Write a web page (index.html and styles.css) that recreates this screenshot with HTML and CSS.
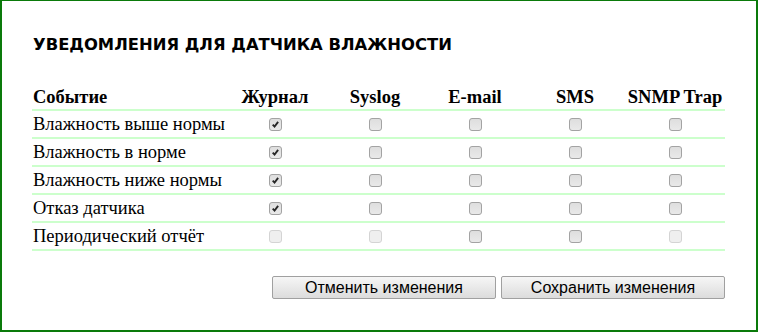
FILE: index.html
```html
<!DOCTYPE html>
<html>
<head>
  <title>Уведомления для датчика влажности</title>
  <meta charset="utf-8">
  <link rel="stylesheet" href="styles.css">
</head>
<body>
  <div class="panel">
    <h1 class="panel-title">УВЕДОМЛЕНИЯ ДЛЯ ДАТЧИКА ВЛАЖНОСТИ</h1>

    <table class="notify-table">
      <colgroup>
        <col class="event-col">
        <col class="chan-col">
        <col class="chan-col">
        <col class="chan-col">
        <col class="chan-col">
        <col class="chan-col">
      </colgroup>
      <thead>
        <tr>
          <th class="event-cell">Событие</th>
          <th>Журнал</th>
          <th>Syslog</th>
          <th>E-mail</th>
          <th>SMS</th>
          <th>SNMP Trap</th>
        </tr>
      </thead>
      <tbody>
        <tr>
          <td class="event-cell">Влажность выше нормы</td>
          <td><span class="cb checked"><svg viewBox="0 0 13 13"><path d="M3.2 6.6 L5.4 9 L9.6 3.4"/></svg></span></td>
          <td><span class="cb"></span></td>
          <td><span class="cb"></span></td>
          <td><span class="cb"></span></td>
          <td><span class="cb"></span></td>
        </tr>
        <tr>
          <td class="event-cell">Влажность в норме</td>
          <td><span class="cb checked"><svg viewBox="0 0 13 13"><path d="M3.2 6.6 L5.4 9 L9.6 3.4"/></svg></span></td>
          <td><span class="cb"></span></td>
          <td><span class="cb"></span></td>
          <td><span class="cb"></span></td>
          <td><span class="cb"></span></td>
        </tr>
        <tr>
          <td class="event-cell">Влажность ниже нормы</td>
          <td><span class="cb checked"><svg viewBox="0 0 13 13"><path d="M3.2 6.6 L5.4 9 L9.6 3.4"/></svg></span></td>
          <td><span class="cb"></span></td>
          <td><span class="cb"></span></td>
          <td><span class="cb"></span></td>
          <td><span class="cb"></span></td>
        </tr>
        <tr>
          <td class="event-cell">Отказ датчика</td>
          <td><span class="cb checked"><svg viewBox="0 0 13 13"><path d="M3.2 6.6 L5.4 9 L9.6 3.4"/></svg></span></td>
          <td><span class="cb"></span></td>
          <td><span class="cb"></span></td>
          <td><span class="cb"></span></td>
          <td><span class="cb"></span></td>
        </tr>
        <tr>
          <td class="event-cell">Периодический отчёт</td>
          <td><span class="cb disabled"></span></td>
          <td><span class="cb disabled"></span></td>
          <td><span class="cb"></span></td>
          <td><span class="cb"></span></td>
          <td><span class="cb disabled"></span></td>
        </tr>
      </tbody>
    </table>

    <div class="actions">
      <button class="btn">Отменить изменения</button>
      <button class="btn">Сохранить изменения</button>
    </div>
  </div>
</body>
</html>
```

FILE: styles.css
```css
body {
  margin: 0;
  width: 758px;
  height: 332px;
  overflow: hidden;
  background: #fff;
}

.panel {
  box-sizing: border-box;
  width: 758px;
  height: 332px;
  border: 2px solid #0a7a0a;
  border-top-width: 1px;
  padding: 0 31px 0 30px;
}

.panel-title {
  margin: 34px 0 0 1px;
  font-family: 'DejaVu Sans', sans-serif;
  font-size: 16.4px;
  font-weight: bold;
  color: #000;
  line-height: 20px;
}

.notify-table {
  margin-top: 30px;
  width: 693px;
  table-layout: fixed;
  border-collapse: collapse;
  font-family: 'Liberation Serif', serif;
  color: #000;
}

.event-col {
  width: 193px;
}

.chan-col {
  width: 100px;
}

.notify-table th {
  font-size: 18.5px;
  font-weight: bold;
  text-align: center;
  height: 24px;
  padding: 0 1px;
  white-space: nowrap;
  border-bottom: 2px solid #ccffcc;
}

.notify-table td {
  font-size: 18.5px;
  text-align: center;
  height: 26px;
  padding: 0 1px;
  white-space: nowrap;
  border-bottom: 2px solid #ccffcc;
}

.notify-table .event-cell {
  text-align: left;
}

.cb {
  display: inline-block;
  box-sizing: border-box;
  width: 13px;
  height: 13px;
  border: 1px solid #a3a3a3;
  border-radius: 3px;
  background: linear-gradient(#dedede, #e9e9e9);
  vertical-align: middle;
  position: relative;
  top: -1px;
}

.cb svg {
  display: block;
  width: 11px;
  height: 11px;
  fill: none;
  stroke: #262626;
  stroke-width: 2.2;
}

.cb.disabled {
  border-color: #d4d4d4;
  background: #efefef;
}

.actions {
  display: flex;
  justify-content: flex-end;
  gap: 5px;
  margin-top: 25px;
}

.btn {
  width: 224px;
  height: 23px;
  padding: 0;
  border: 1px solid #a0a0a0;
  border-radius: 2px;
  background: linear-gradient(#f6f6f6, #dcdcdc);
  font-family: 'Liberation Sans', Arial, sans-serif;
  font-size: 16px;
  color: #000;
}
```
